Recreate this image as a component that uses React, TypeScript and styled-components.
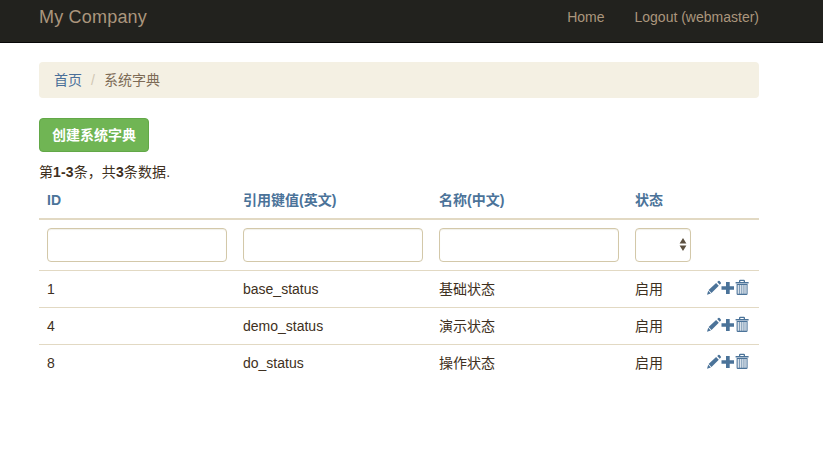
import React from "react";
import styled, { createGlobalStyle, css } from "styled-components";

const Global = createGlobalStyle`
  *, *::before, *::after { box-sizing: border-box; }
  body {
    margin: 0;
    background: #fff;
    color: #3e3021;
    font: 14px/20px "Liberation Sans", "Noto Sans CJK SC", sans-serif;
  }
`;

const Container = styled.div`
  width: 720px;
  margin-left: 39px;
`;

const Navbar = styled.header`
  height: 43px;
  background: #22221e;
  border-bottom: 1px solid #080808;
`;

const NavInner = styled(Container)`
  display: flex;
  justify-content: space-between;
  padding-top: 7px;
`;

const Brand = styled.a`
  color: #ab967d;
  font-size: 18px;
  line-height: 20px;
  letter-spacing: 0.2px;
`;

const NavLinks = styled.nav`
  display: flex;
  gap: 30px;
`;

const NavLink = styled.a`
  color: #ab967d;
`;

const Breadcrumb = styled.ol`
  display: flex;
  height: 36px;
  margin: 19px 0 20px;
  padding: 8px 15px;
  list-style: none;
  background: #f4f0e3;
  border-radius: 4px;
`;

const Crumb = styled.li<{ $active?: boolean }>`
  color: ${(p) => (p.$active ? "#7d6b56" : "#4a6f99")};
  &:not(:first-child)::before {
    content: "/";
    padding: 0 9px;
    color: #d1c7b3;
  }
`;

const CreateButton = styled.button`
  display: block;
  width: 110px;
  height: 34px;
  padding: 0;
  font: bold 14px/20px "Liberation Sans", "Noto Sans CJK SC", sans-serif;
  color: #fff;
  background: #70b554;
  border: 1px solid #62a847;
  border-radius: 4px;
`;

const Summary = styled.div`
  margin-top: 10px;
  height: 20px;
  letter-spacing: 0.1px;
`;

const Table = styled.table`
  width: 100%;
  table-layout: fixed;
  border-collapse: separate;
  border-spacing: 0;
`;

const HeaderCell = styled.th`
  height: 38px;
  padding: 8px;
  text-align: left;
  color: #4b7399;
  border-bottom: 2px solid #e2d9c3;
`;

const Cell = styled.td<{ $first?: boolean }>`
  height: 37px;
  padding: 8px;
  vertical-align: top;
  ${(p) => !p.$first && css`border-top: 1px solid #e2d9c3;`}
`;

const control = css`
  display: block;
  width: 100%;
  height: 34px;
  background: #fff;
  border: 1px solid #d3c8a9;
  border-radius: 4px;
  box-shadow: inset 0 1px 1px rgba(120, 100, 30, 0.1);
`;

const Input = styled.input`
  ${control}
  padding: 6px 12px;
  font: inherit;
  outline: none;
`;

const StatusSelect = styled.button`
  ${control}
  display: flex;
  align-items: center;
  justify-content: flex-end;
  padding: 0 3px 1px 0;
`;

const Actions = styled.div`
  display: flex;
  height: 20px;
`;

const Icon = styled.svg`
  display: block;
  flex: none;
  fill: #4b7399;
`;

const Pencil = () => (
  <Icon width="14" height="17" viewBox="0 -1 14 17">
    <path d="M10.2 2 11.3 1Q12 .4 12.6 1L13.8 2.4Q14.3 3.1 13.7 3.7L12.7 4.7ZM9.1 2.9 11.8 5.8 4.5 13 1.6 10ZM1.2 10.8 3.9 13.5 0 14.8Z" />
  </Icon>
);

const Plus = () => (
  <Icon width="14" height="17" viewBox="0 -1 14 17">
    <path d="M5 2H8.7V6.2H13V9.8H8.7V14H5V9.8H.5V6.2H5Z" />
  </Icon>
);

const Trash = () => (
  <Icon width="15" height="17" viewBox="0 -1 15 17">
    <path fillRule="evenodd" d="M4 2V1Q4-.2 5.2-.2H8.8Q10 -.2 10 1V2H13.6V3.4H.6V2ZM5.3 2H8.7V.9H5.3Z" />
    <path fillRule="evenodd" d="M1.6 4.1H12.6V13.8Q12.6 15 11.4 15H2.8Q1.6 15 1.6 13.8ZM2.7 5.1V13.8H3.8V5.1ZM4.7 5.1V13.8H5.8V5.1ZM6.6 5.1V13.8H7.7V5.1ZM8.5 5.1V13.8H9.6V5.1ZM10.4 5.1V13.8H11.5V5.1Z" />
  </Icon>
);

const entries = [
  { id: 1, key: "base_status", name: "基础状态" },
  { id: 4, key: "demo_status", name: "演示状态" },
  { id: 8, key: "do_status", name: "操作状态" },
];

export default function App() {
  return (
    <>
      <Global />
      <Navbar>
        <NavInner>
          <Brand>My Company</Brand>
          <NavLinks>
            <NavLink>Home</NavLink>
            <NavLink>Logout (webmaster)</NavLink>
          </NavLinks>
        </NavInner>
      </Navbar>
      <Container as="main">
        <Breadcrumb>
          <Crumb>首页</Crumb>
          <Crumb $active>系统字典</Crumb>
        </Breadcrumb>
        <CreateButton>创建系统字典</CreateButton>
        <Summary>
          第<b>1-3</b>条，共<b>3</b>条数据.
        </Summary>
        <Table>
          <colgroup>
            <col width="196" />
            <col width="196" />
            <col width="196" />
            <col width="72" />
            <col width="60" />
          </colgroup>
          <thead>
            <tr>
              <HeaderCell>ID</HeaderCell>
              <HeaderCell>引用键值(英文)</HeaderCell>
              <HeaderCell>名称(中文)</HeaderCell>
              <HeaderCell>状态</HeaderCell>
              <HeaderCell />
            </tr>
          </thead>
          <tbody>
            <tr>
              <Cell $first><Input /></Cell>
              <Cell $first><Input /></Cell>
              <Cell $first><Input /></Cell>
              <Cell $first>
                <StatusSelect>
                  <svg width="8" height="13" viewBox="0 0 8 13" fill="#5c5040">
                    <path d="M4 0 7.4 5.5H.6ZM4 13 .6 7.5H7.4Z" />
                  </svg>
                </StatusSelect>
              </Cell>
              <Cell $first />
            </tr>
            {entries.map((entry) => (
              <tr key={entry.id}>
                <Cell>{entry.id}</Cell>
                <Cell>{entry.key}</Cell>
                <Cell>{entry.name}</Cell>
                <Cell>启用</Cell>
                <Cell>
                  <Actions>
                    <Pencil />
                    <Plus />
                    <Trash />
                  </Actions>
                </Cell>
              </tr>
            ))}
          </tbody>
        </Table>
      </Container>
    </>
  );
}
